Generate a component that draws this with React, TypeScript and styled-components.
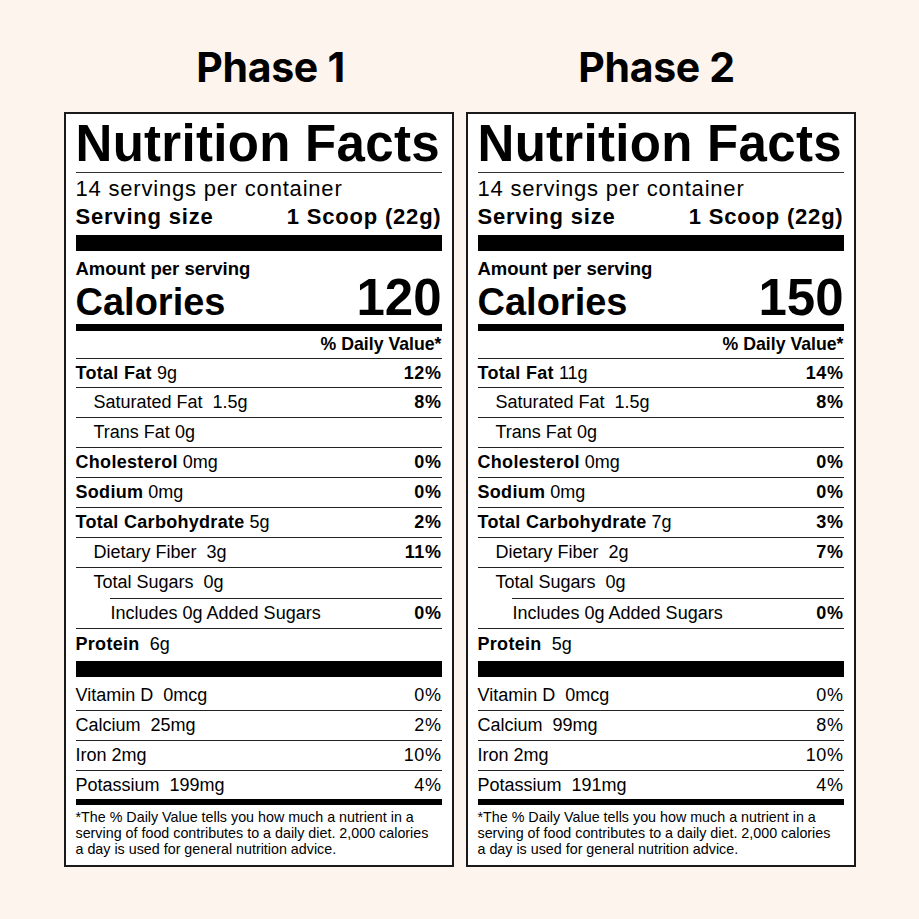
import React from "react";
import styled, { createGlobalStyle } from "styled-components";

const Global = createGlobalStyle`
  html, body { margin: 0; padding: 0; background: #fdf4ee; }
  body { font-family: "Liberation Sans", Arial, sans-serif; color: #000; }
`;

const Page = styled.div`
  width: 919px;
  height: 919px;
  box-sizing: border-box;
  padding-top: 43px;
  display: grid;
  grid-template-columns: 390px 390px;
  column-gap: 12px;
  justify-content: center;
  align-content: start;
`;

const Column = styled.div`
  display: flex;
  flex-direction: column;
`;

const Heading = styled.h1<{ $shift: number }>`
  margin: 0 0 21px;
  font-family: Inter, "Liberation Sans", sans-serif;
  font-weight: 700;
  font-size: 41px;
  line-height: 48px;
  letter-spacing: -0.3px;
  text-align: center;
  padding-left: ${(p) => (p.$shift > 0 ? p.$shift * 2 : 0)}px;
  padding-right: ${(p) => (p.$shift < 0 ? -p.$shift * 2 : 0)}px;
`;

const Label = styled.div`
  box-sizing: border-box;
  width: 390px;
  border: 2px solid #1a1a1a;
  background: #fff;
  padding: 2px 10px 8px;
  display: flex;
  flex-direction: column;
`;

const Title = styled.div`
  font-weight: 700;
  font-size: 51px;
  line-height: 56px;
  letter-spacing: 0.3px;
  white-space: nowrap;
  border-bottom: 1px solid #333;
`;

const Servings = styled.div`
  padding-top: 2px;
  font-size: 22px;
  line-height: 28px;
  letter-spacing: 0.8px;
`;

const ServingSize = styled.div`
  display: flex;
  justify-content: space-between;
  font-weight: 700;
  font-size: 22px;
  line-height: 28px;
  letter-spacing: 0.8px;
`;

const Bar = styled.div<{ $h: number; $mt?: number }>`
  height: ${(p) => p.$h}px;
  margin-top: ${(p) => p.$mt ?? 0}px;
  background: #000;
`;

const Amount = styled.div`
  padding-top: 7px;
  font-weight: 700;
  font-size: 18.5px;
  line-height: 22px;
`;

const CaloriesRow = styled.div`
  display: flex;
  justify-content: space-between;
  align-items: baseline;
  height: 44px;
  line-height: 36px;
  font-weight: 700;
`;

const CaloriesWord = styled.span`
  font-size: 38px;
`;

const CaloriesNum = styled.span`
  font-size: 51px;
`;

const DVHeader = styled.div`
  text-align: right;
  font-weight: 700;
  font-size: 17.7px;
  line-height: 27px;
  border-bottom: 1px solid #222;
`;

const Row = styled.div<{ $indent?: number; $h?: number; $line?: boolean; $pt?: number }>`
  box-sizing: border-box;
  height: ${(p) => p.$h ?? 30}px;
  padding-top: ${(p) => p.$pt ?? 0}px;
  margin-left: ${(p) => p.$indent ?? 0}px;
  display: flex;
  justify-content: space-between;
  font-size: 18px;
  line-height: 28px;
  white-space: pre;
  border-bottom: ${(p) => (p.$line === false ? "none" : "1px solid #222")};
`;

const IndentedLine = styled.div<{ $indent: number }>`
  margin-left: ${(p) => p.$indent}px;
  border-top: 1px solid #222;
`;

const Name = styled.span<{ $pad: number }>`
  padding-left: ${(p) => p.$pad}px;
`;

const Bold = styled.b`
  font-weight: 700;
  letter-spacing: 0.3px;
`;

const Pct = styled.span<{ $bold?: boolean }>`
  font-weight: ${(p) => (p.$bold ? 700 : 400)};
  letter-spacing: 0.6px;
`;

const Footnote = styled.p`
  margin: 4px 0 0;
  font-size: 14.3px;
  line-height: 16px;
  white-space: nowrap;
`;

type Nutrient = {
  name: string;
  amount: string;
  bold?: boolean;
  indent?: number;
  pct?: string;
};

type LabelData = {
  phase: string;
  shift: number;
  calories: string;
  protein: string;
  nutrients: Nutrient[];
  vitamins: { name: string; pct: string }[];
};

const labels: LabelData[] = [
  {
    phase: "Phase 1",
    shift: 12,
    calories: "120",
    protein: "6g",
    nutrients: [
      { name: "Total Fat", amount: "9g", bold: true, pct: "12%" },
      { name: "Saturated Fat", amount: " 1.5g", indent: 18, pct: "8%" },
      { name: "Trans Fat", amount: "0g", indent: 18 },
      { name: "Cholesterol", amount: "0mg", bold: true, pct: "0%" },
      { name: "Sodium", amount: "0mg", bold: true, pct: "0%" },
      { name: "Total Carbohydrate", amount: "5g", bold: true, pct: "2%" },
      { name: "Dietary Fiber", amount: " 3g", indent: 18, pct: "11%" },
    ],
    vitamins: [
      { name: "Vitamin D  0mcg", pct: "0%" },
      { name: "Calcium  25mg", pct: "2%" },
      { name: "Iron 2mg", pct: "10%" },
      { name: "Potassium  199mg", pct: "4%" },
    ],
  },
  {
    phase: "Phase 2",
    shift: -4,
    calories: "150",
    protein: "5g",
    nutrients: [
      { name: "Total Fat", amount: "11g", bold: true, pct: "14%" },
      { name: "Saturated Fat", amount: " 1.5g", indent: 18, pct: "8%" },
      { name: "Trans Fat", amount: "0g", indent: 18 },
      { name: "Cholesterol", amount: "0mg", bold: true, pct: "0%" },
      { name: "Sodium", amount: "0mg", bold: true, pct: "0%" },
      { name: "Total Carbohydrate", amount: "7g", bold: true, pct: "3%" },
      { name: "Dietary Fiber", amount: " 2g", indent: 18, pct: "7%" },
    ],
    vitamins: [
      { name: "Vitamin D  0mcg", pct: "0%" },
      { name: "Calcium  99mg", pct: "8%" },
      { name: "Iron 2mg", pct: "10%" },
      { name: "Potassium  191mg", pct: "4%" },
    ],
  },
];

function NutritionLabel({ data }: { data: LabelData }) {
  return (
    <Column>
      <Heading $shift={data.shift}>{data.phase}</Heading>
      <Label>
        <Title>Nutrition Facts</Title>
        <Servings>14 servings per container</Servings>
        <ServingSize>
          <span>Serving size</span>
          <span>1 Scoop (22g)</span>
        </ServingSize>
        <Bar $h={16} $mt={4} />
        <Amount>Amount per serving</Amount>
        <CaloriesRow>
          <CaloriesWord>Calories</CaloriesWord>
          <CaloriesNum>{data.calories}</CaloriesNum>
        </CaloriesRow>
        <Bar $h={7} />
        <DVHeader>% Daily Value*</DVHeader>
        {data.nutrients.map((n, i) => (
          <Row key={n.name} $h={i === 0 ? 29 : 30}>
            <Name $pad={n.indent ?? 0}>
              {n.bold ? <Bold>{n.name}</Bold> : n.name} {n.amount}
            </Name>
            {n.pct && <Pct $bold>{n.pct}</Pct>}
          </Row>
        ))}
        <Row $line={false}>
          <Name $pad={18}>Total Sugars  0g</Name>
        </Row>
        <IndentedLine $indent={34} />
        <Row $h={30}>
          <Name $pad={35}>Includes 0g Added Sugars</Name>
          <Pct $bold>0%</Pct>
        </Row>
        <Row $h={32} $line={false} $pt={1}>
          <Name $pad={0}>
            <Bold>Protein</Bold>  {data.protein}
          </Name>
        </Row>
        <Bar $h={16} />
        {data.vitamins.map((v, i) => (
          <Row
            key={v.name}
            $h={i === 0 ? 34 : i === 3 ? 28 : 30}
            $pt={i === 0 ? 4 : 0}
            $line={i !== 3}
          >
            <Name $pad={0}>{v.name}</Name>
            <Pct>{v.pct}</Pct>
          </Row>
        ))}
        <Bar $h={6} />
        <Footnote>
          *The % Daily Value tells you how much a nutrient in a
          <br />
          serving of food contributes to a daily diet. 2,000 calories
          <br />
          a day is used for general nutrition advice.
        </Footnote>
      </Label>
    </Column>
  );
}

export default function App() {
  return (
    <>
      <Global />
      <Page>
        {labels.map((l) => (
          <NutritionLabel key={l.phase} data={l} />
        ))}
      </Page>
    </>
  );
}
